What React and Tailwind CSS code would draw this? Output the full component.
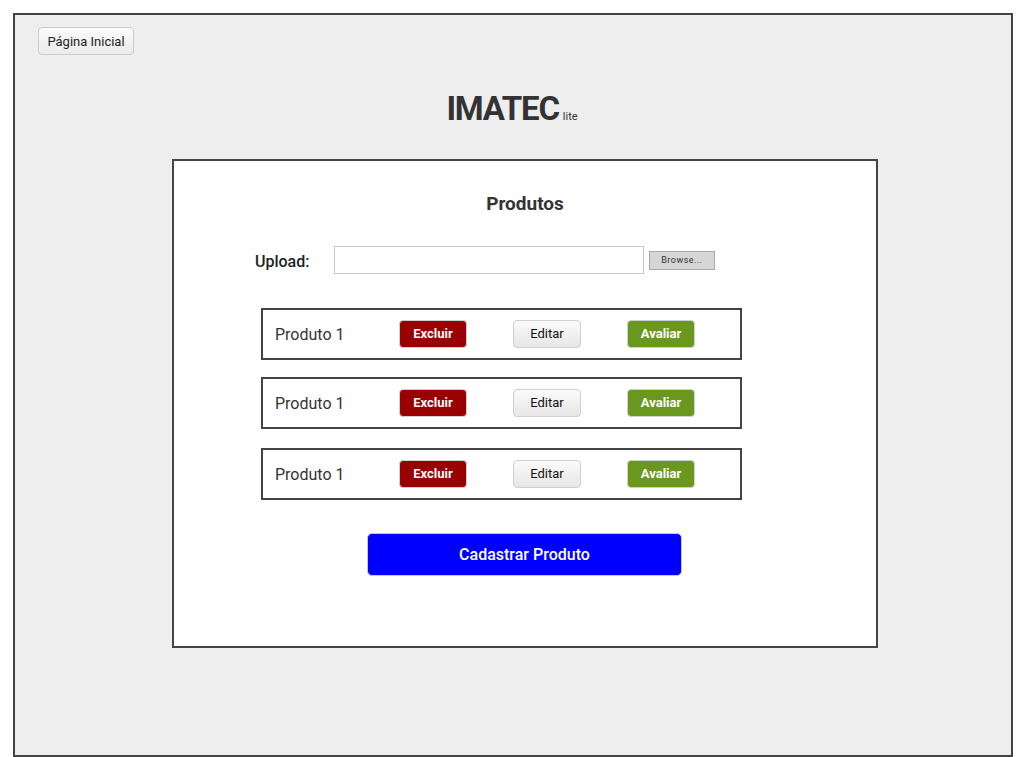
const rows = [{ mt: "mt-[34px]" }, { mt: "mt-[17px]" }, { mt: "mt-[19px]" }];

function ProductRow({ mt }) {
    return (
        <div className={`${mt} ml-[87px] flex h-[52px] w-[481px] items-center border-2 border-[#444] pl-[12px]`}>
            <span className="w-[124px] pt-px text-[16px] text-[#333]">Produto 1</span>
            <button className="h-[28px] w-[68px] rounded-[4px] border border-[#cfcfcf] bg-[#990000] text-[13px] font-bold text-white">
                Excluir
            </button>
            <button className="ml-[46px] h-[28px] w-[68px] rounded-[4px] border border-[#cfcfcf] bg-gradient-to-b from-[#fbfbfb] to-[#e6e6e6] text-[13px] text-[#111]">
                Editar
            </button>
            <button className="ml-[46px] h-[28px] w-[68px] rounded-[4px] border border-[#cfcfcf] bg-[#6a981e] text-[13px] font-bold text-white">
                Avaliar
            </button>
        </div>
    );
}

export default function App() {
    return (
        <div className="min-h-[757px] bg-white pl-[13px] pt-[13px] font-['Roboto',sans-serif]">
            <div className="flex h-[744px] w-[1000px] flex-col border-2 border-[#444] bg-[#eeeeee]">
                <div className="ml-[23px] mt-[12px]">
                    <button className="h-[28px] w-[96px] rounded-[4px] border border-[#cccccc] bg-gradient-to-b from-[#fbfbfb] to-[#ebebeb] pt-px text-[13px] text-[#222]">
                        Página Inicial
                    </button>
                </div>

                <div className="mt-[34px] flex items-baseline justify-center pr-[2px]">
                    <span className="text-[33px] font-bold leading-[40px] tracking-[-1.2px] text-[#333]">IMATEC</span>
                    <span className="ml-[4px] text-[11px] text-[#333]">lite</span>
                </div>

                <div className="ml-[157px] mt-[30px] flex w-[706px] flex-col border-2 border-[#444] bg-white pb-[70px] pt-[31px]">
                    <h1 className="text-center text-[19px] font-bold leading-[24px] text-[#333]">Produtos</h1>

                    <div className="ml-[81px] mt-[30px] flex items-center">
                        <span className="w-[79px] pt-[3px] text-[16px] font-medium text-[#222]">Upload:</span>
                        <div className="h-[28px] w-[310px] border border-[#c8c8c8] bg-white" />
                        <button className="ml-[5px] h-[19px] w-[66px] border border-[#a8a8a8] bg-[#d6d6d6] pt-px text-[9px] tracking-[0.5px] text-[#333]">
                            Browse...
                        </button>
                    </div>

                    {rows.map((row, index) => (
                        <ProductRow key={index} mt={row.mt} />
                    ))}

                    <button className="ml-[193px] mt-[33px] h-[43px] w-[315px] rounded-[5px] border border-[#c8c8c8] bg-[#0000ff] text-[16px] font-medium text-white">
                        Cadastrar Produto
                    </button>
                </div>
            </div>
        </div>
    );
}
